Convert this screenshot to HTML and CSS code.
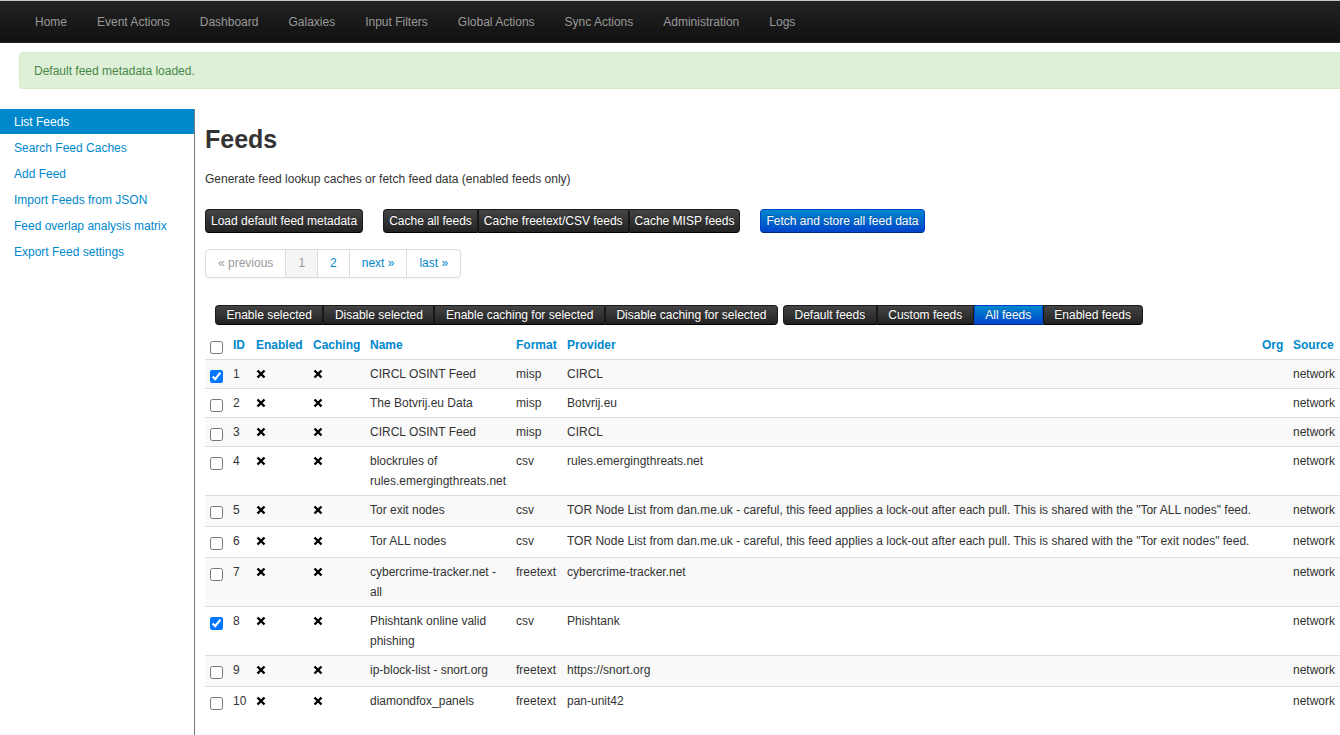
FILE: index.html
```html
<!DOCTYPE html>
<html>
<head>
<meta charset="utf-8">
<link rel="stylesheet" href="styles.css">
</head>
<body>
<div class="navbar">
  <ul class="nav">
    <li>Home</li><li>Event Actions</li><li>Dashboard</li><li>Galaxies</li><li>Input Filters</li><li>Global Actions</li><li>Sync Actions</li><li>Administration</li><li>Logs</li>
  </ul>
</div>
<div class="alert">Default feed metadata loaded.</div>
<div class="layout">
  <div class="sidebar">
    <a class="active">List Feeds</a>
    <a>Search Feed Caches</a>
    <a>Add Feed</a>
    <a>Import Feeds from JSON</a>
    <a>Feed overlap analysis matrix</a>
    <a>Export Feed settings</a>
  </div>
  <div class="main">
    <h2>Feeds</h2>
    <p class="desc">Generate feed lookup caches or fetch feed data (enabled feeds only)</p>
    <div class="toolbar">
      <div class="btn-group"><span class="btn">Load default feed metadata</span></div>
      <div class="btn-group"><span class="btn">Cache all feeds</span><span class="btn">Cache freetext/CSV feeds</span><span class="btn">Cache MISP feeds</span></div>
      <div class="btn-group"><span class="btn primary">Fetch and store all feed data</span></div>
    </div>
    <ul class="pagination">
      <li class="disabled">« previous</li><li class="current">1</li><li>2</li><li>next »</li><li>last »</li>
    </ul>
    <div class="minibar">
      <div class="btn-group"><span class="btn mini">Enable selected</span><span class="btn mini">Disable selected</span><span class="btn mini">Enable caching for selected</span><span class="btn mini">Disable caching for selected</span></div>
      <div class="btn-group"><span class="btn mini">Default feeds</span><span class="btn mini">Custom feeds</span><span class="btn mini primary">All feeds</span><span class="btn mini">Enabled feeds</span></div>
    </div>
    <table class="feeds">
      <colgroup>
        <col class="c-cb"><col class="c-id"><col class="c-en"><col class="c-ca"><col class="c-name"><col class="c-fmt"><col class="c-prov"><col class="c-org"><col class="c-src">
      </colgroup>
      <thead>
        <tr><th><input type="checkbox"></th><th>ID</th><th>Enabled</th><th>Caching</th><th>Name</th><th>Format</th><th>Provider</th><th>Org</th><th>Source</th></tr>
      </thead>
      <tbody>
        <tr><td><input type="checkbox" checked></td><td>1</td><td><svg class="x" viewBox="0 0 10 10"><path d="M1.5 1.5L8.5 8.5M8.5 1.5L1.5 8.5"/></svg></td><td><svg class="x" viewBox="0 0 10 10"><path d="M1.5 1.5L8.5 8.5M8.5 1.5L1.5 8.5"/></svg></td><td>CIRCL OSINT Feed</td><td>misp</td><td>CIRCL</td><td></td><td>network</td></tr>
        <tr><td><input type="checkbox"></td><td>2</td><td><svg class="x" viewBox="0 0 10 10"><path d="M1.5 1.5L8.5 8.5M8.5 1.5L1.5 8.5"/></svg></td><td><svg class="x" viewBox="0 0 10 10"><path d="M1.5 1.5L8.5 8.5M8.5 1.5L1.5 8.5"/></svg></td><td>The Botvrij.eu Data</td><td>misp</td><td>Botvrij.eu</td><td></td><td>network</td></tr>
        <tr><td><input type="checkbox"></td><td>3</td><td><svg class="x" viewBox="0 0 10 10"><path d="M1.5 1.5L8.5 8.5M8.5 1.5L1.5 8.5"/></svg></td><td><svg class="x" viewBox="0 0 10 10"><path d="M1.5 1.5L8.5 8.5M8.5 1.5L1.5 8.5"/></svg></td><td>CIRCL OSINT Feed</td><td>misp</td><td>CIRCL</td><td></td><td>network</td></tr>
        <tr><td><input type="checkbox"></td><td>4</td><td><svg class="x" viewBox="0 0 10 10"><path d="M1.5 1.5L8.5 8.5M8.5 1.5L1.5 8.5"/></svg></td><td><svg class="x" viewBox="0 0 10 10"><path d="M1.5 1.5L8.5 8.5M8.5 1.5L1.5 8.5"/></svg></td><td>blockrules of rules.emergingthreats.net</td><td>csv</td><td>rules.emergingthreats.net</td><td></td><td>network</td></tr>
        <tr class="tall"><td><input type="checkbox"></td><td>5</td><td><svg class="x" viewBox="0 0 10 10"><path d="M1.5 1.5L8.5 8.5M8.5 1.5L1.5 8.5"/></svg></td><td><svg class="x" viewBox="0 0 10 10"><path d="M1.5 1.5L8.5 8.5M8.5 1.5L1.5 8.5"/></svg></td><td>Tor exit nodes</td><td>csv</td><td>TOR Node List from dan.me.uk - careful, this feed applies a lock-out after each pull. This is shared with the "Tor ALL nodes" feed.</td><td></td><td>network</td></tr>
        <tr class="tall"><td><input type="checkbox"></td><td>6</td><td><svg class="x" viewBox="0 0 10 10"><path d="M1.5 1.5L8.5 8.5M8.5 1.5L1.5 8.5"/></svg></td><td><svg class="x" viewBox="0 0 10 10"><path d="M1.5 1.5L8.5 8.5M8.5 1.5L1.5 8.5"/></svg></td><td>Tor ALL nodes</td><td>csv</td><td>TOR Node List from dan.me.uk - careful, this feed applies a lock-out after each pull. This is shared with the "Tor exit nodes" feed.</td><td></td><td>network</td></tr>
        <tr><td><input type="checkbox"></td><td>7</td><td><svg class="x" viewBox="0 0 10 10"><path d="M1.5 1.5L8.5 8.5M8.5 1.5L1.5 8.5"/></svg></td><td><svg class="x" viewBox="0 0 10 10"><path d="M1.5 1.5L8.5 8.5M8.5 1.5L1.5 8.5"/></svg></td><td>cybercrime-tracker.net - all</td><td>freetext</td><td>cybercrime-tracker.net</td><td></td><td>network</td></tr>
        <tr><td><input type="checkbox" checked></td><td>8</td><td><svg class="x" viewBox="0 0 10 10"><path d="M1.5 1.5L8.5 8.5M8.5 1.5L1.5 8.5"/></svg></td><td><svg class="x" viewBox="0 0 10 10"><path d="M1.5 1.5L8.5 8.5M8.5 1.5L1.5 8.5"/></svg></td><td>Phishtank online valid phishing</td><td>csv</td><td>Phishtank</td><td></td><td>network</td></tr>
        <tr class="tall"><td><input type="checkbox"></td><td>9</td><td><svg class="x" viewBox="0 0 10 10"><path d="M1.5 1.5L8.5 8.5M8.5 1.5L1.5 8.5"/></svg></td><td><svg class="x" viewBox="0 0 10 10"><path d="M1.5 1.5L8.5 8.5M8.5 1.5L1.5 8.5"/></svg></td><td>ip-block-list - snort.org</td><td>freetext</td><td>https://snort.org</td><td></td><td>network</td></tr>
        <tr class="tall"><td><input type="checkbox"></td><td>10</td><td><svg class="x" viewBox="0 0 10 10"><path d="M1.5 1.5L8.5 8.5M8.5 1.5L1.5 8.5"/></svg></td><td><svg class="x" viewBox="0 0 10 10"><path d="M1.5 1.5L8.5 8.5M8.5 1.5L1.5 8.5"/></svg></td><td>diamondfox_panels</td><td>freetext</td><td>pan-unit42</td><td></td><td>network</td></tr>
      </tbody>
    </table>
  </div>
</div>
</body>
</html>
```

FILE: styles.css
```css
html, body {
  margin: 0;
  padding: 0;
  overflow: hidden;
}
body {
  font-family: "Liberation Sans", Arial, sans-serif;
  font-size: 12px;
  line-height: 20px;
  color: #333;
  background: #fff;
}
.navbar {
  border-top: 1px solid #c8c8c8;
  background: linear-gradient(#222, #111);
  border-bottom: 1px solid #252525;
  box-sizing: border-box;
  height: 43px;
}
.nav {
  list-style: none;
  margin: 0;
  padding: 0 0 0 20px;
  display: flex;
}
.nav li {
  padding: 11px 15px 9px;
  color: #999;
  line-height: 21px;
}
.alert {
  margin: 9px -40px 0 19px;
  padding: 8px 35px 7px 14px;
  background: #dff0d8;
  border: 1px solid #d6e9c6;
  border-radius: 4px;
  color: #468847;
}
.layout {
  display: flex;
  margin-top: 20px;
  min-height: 640px;
}
.sidebar {
  width: 194px;
  flex: none;
  border-right: 1px solid #7a7a7a;
}
.sidebar a {
  display: block;
  padding: 4px 14px 1px;
  line-height: 21px;
  color: #0088cc;
}
.sidebar a.active {
  background: #0088cc;
  color: #fff;
  padding: 3px 14px 1px;
}
.main {
  padding-left: 10px;
  flex: 1;
}
h2 {
  margin: 10px 0 10px;
  font-size: 25px;
  line-height: 40px;
  font-weight: bold;
}
.desc {
  margin: 0;
}
.toolbar {
  display: flex;
  margin-top: 20px;
}
.toolbar .btn-group {
  margin-right: 20px;
}
.btn-group {
  display: flex;
}
.btn {
  display: inline-block;
  color: #fff;
  background: linear-gradient(#444, #222);
  border: 1px solid #1a1a1a;
  border-bottom-color: #000;
  text-shadow: 0 -1px 0 rgba(0,0,0,0.25);
  padding: 1px 5px;
  line-height: 20px;
  white-space: nowrap;
}
.btn + .btn {
  border-left-color: #151515;
}
.btn-group .btn:first-child {
  border-radius: 4px 0 0 4px;
}
.btn-group .btn:last-child {
  border-radius: 0 4px 4px 0;
}
.btn-group .btn:only-child {
  border-radius: 4px;
}
.btn.primary {
  background: linear-gradient(#0088cc, #0044cc);
  border-color: #0044cc #0044cc #002a80;
}
.pagination {
  list-style: none;
  margin: 16px 0 0;
  padding: 0;
  display: inline-flex;
  border: 1px solid #ddd;
  border-radius: 4px;
  box-shadow: 0 1px 2px rgba(0,0,0,0.05);
}
.pagination li {
  padding: 4px 12px;
  line-height: 19px;
  color: #0088cc;
  border-left: 1px solid #ddd;
}
.pagination li:first-child {
  border-left: 0;
}
.pagination li.disabled {
  color: #999;
}
.pagination li.current {
  color: #999;
  background: #f5f5f5;
}
.minibar {
  display: flex;
  margin: 27px 0 0 10px;
}
.minibar .btn-group {
  margin-right: 5px;
}
.btn.mini {
  padding: 0 10.5px;
  line-height: 18px;
}
.feeds {
  margin-top: 6px;
  width: 1135px;
  table-layout: fixed;
  border-collapse: collapse;
  border-spacing: 0;
}
.c-cb { width: 23px; }
.c-id { width: 23px; }
.c-en { width: 57px; }
.c-ca { width: 57px; }
.c-name { width: 146px; }
.c-fmt { width: 51px; }
.c-prov { width: 695px; }
.c-org { width: 31px; }
.c-src { width: 52px; }
.feeds th, .feeds td {
  padding: 4px 5px;
  line-height: 20px;
  text-align: left;
  vertical-align: top;
}
.feeds th {
  color: #0088cc;
  font-weight: bold;
  vertical-align: bottom;
}
.feeds td {
  border-top: 1px solid #ddd;
}
.feeds tr.tall td {
  padding-bottom: 6px;
}
.feeds tbody tr:nth-child(odd) td {
  background: #f9f9f9;
}
.feeds input[type=checkbox] {
  margin: 6px 0 0;
  width: 13px;
  height: 13px;
  vertical-align: top;
}
.feeds th input[type=checkbox] {
  margin-top: 6px;
  margin-bottom: -2px;
}
.x {
  width: 10px;
  height: 10px;
  margin-top: 5px;
  display: block;
}
.x path {
  stroke: #000;
  stroke-width: 2.4;
  fill: none;
}
```
